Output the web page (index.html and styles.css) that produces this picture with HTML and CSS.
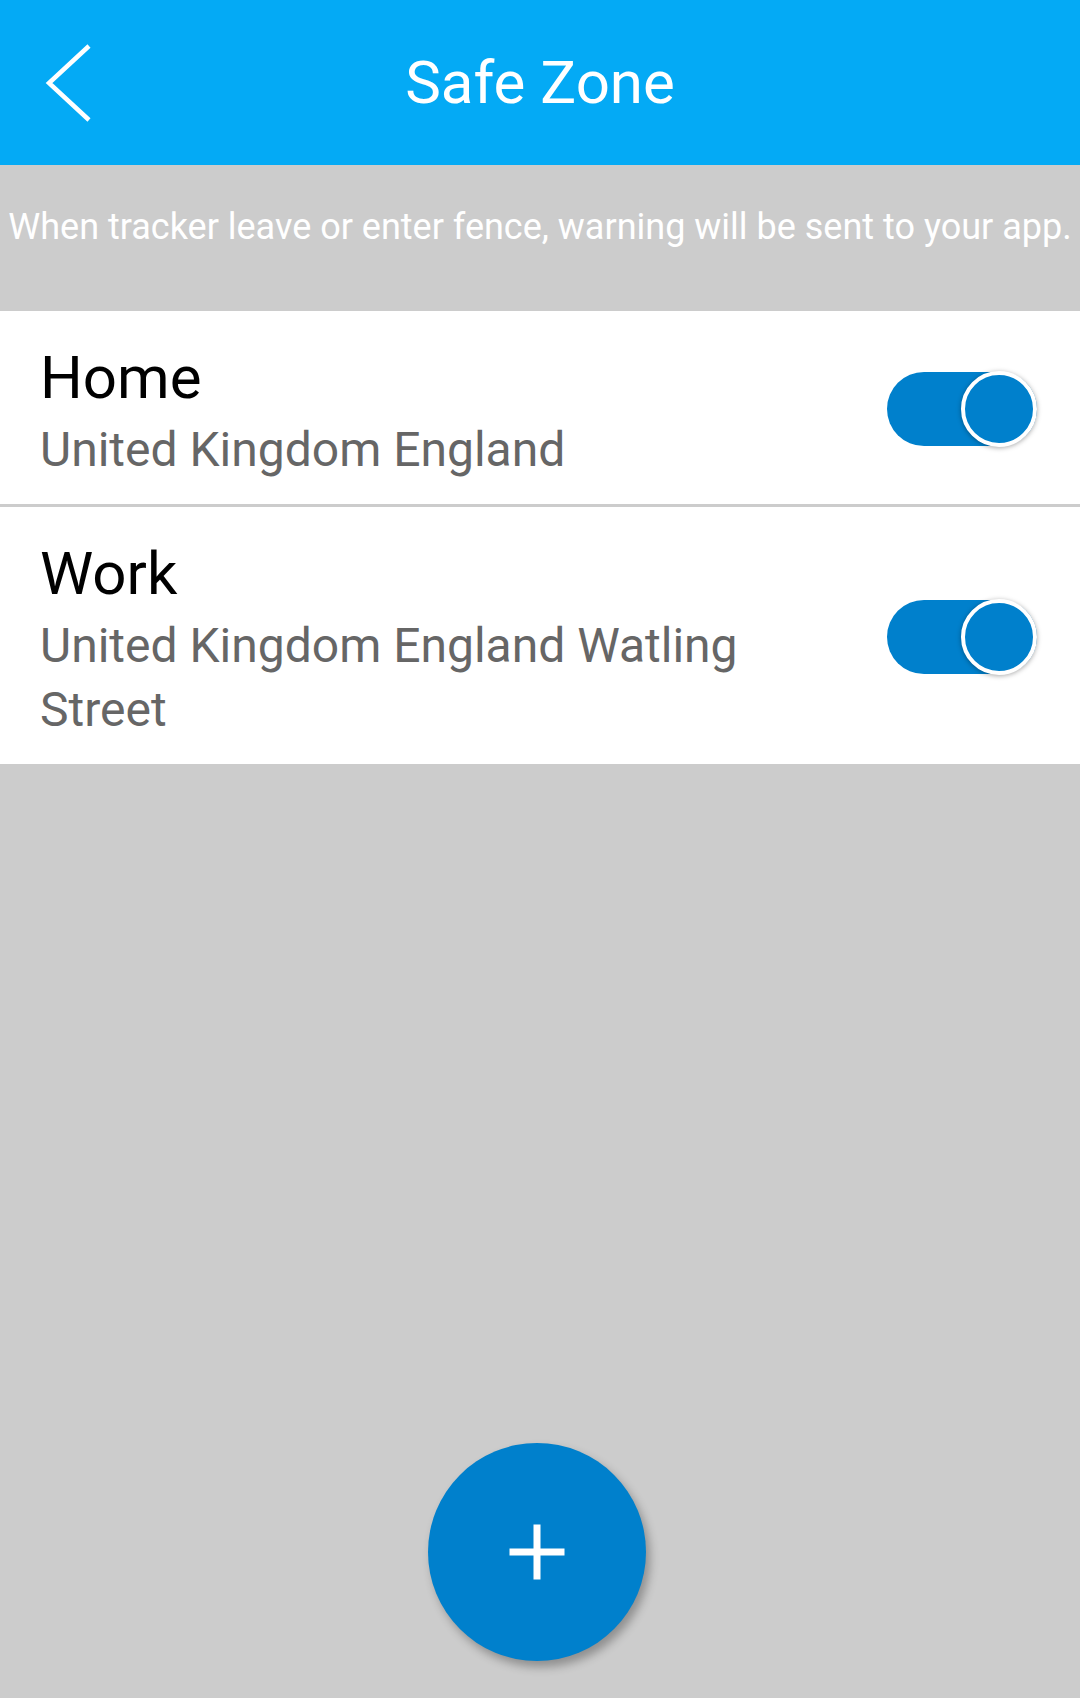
FILE: index.html
```html
<!DOCTYPE html>
<html lang="en">
<head>
<meta charset="utf-8">
<title>Safe Zone</title>
<link rel="stylesheet" href="styles.css">
</head>
<body>
<div class="screen">
  <header class="toolbar">
    <div class="toolbar-left">
      <svg class="back-icon" width="50" height="80" viewBox="0 0 50 80" aria-hidden="true">
        <polyline points="45,3 5,40 45,77" fill="none" stroke="#ffffff" stroke-width="4.5" stroke-linecap="butt" stroke-linejoin="miter"/>
      </svg>
    </div>
    <h1 class="toolbar-title">Safe Zone</h1>
    <div class="toolbar-right"></div>
  </header>

  <p class="notice">When tracker leave or enter fence, warning will be sent to your app.</p>

  <ul class="zone-list">
    <li class="zone">
      <div class="zone-text">
        <div class="zone-name">Home</div>
        <div class="zone-address">United Kingdom England</div>
      </div>
      <div class="switch on"><span class="knob"></span></div>
    </li>
    <li class="zone">
      <div class="zone-text">
        <div class="zone-name">Work</div>
        <div class="zone-address">United Kingdom England Watling Street</div>
      </div>
      <div class="switch on"><span class="knob"></span></div>
    </li>
  </ul>

  <div class="spacer"></div>

  <div class="fab-wrap">
    <button class="fab" aria-label="Add safe zone">
      <span class="plus-h"></span>
      <span class="plus-v"></span>
    </button>
  </div>
</div>
</body>
</html>
```

FILE: styles.css
```css
* {
  box-sizing: border-box;
}

html, body {
  margin: 0;
  padding: 0;
}

body {
  font-family: Roboto, "Noto Sans", "Liberation Sans", sans-serif;
  background: #cccccc;
}

.screen {
  width: 1080px;
  height: 1698px;
  display: flex;
  flex-direction: column;
  background: #cccccc;
}

.toolbar {
  height: 165px;
  background: #04aaf5;
  display: grid;
  grid-template-columns: 1fr auto 1fr;
  align-items: center;
  flex-shrink: 0;
}

.toolbar-left {
  display: flex;
  align-items: center;
  padding-left: 44px;
}

.back-icon {
  display: block;
}

.toolbar-title {
  margin: 0;
  font-weight: 400;
  font-size: 60px;
  line-height: 70px;
  color: #ffffff;
}

.notice {
  margin: 0;
  height: 146px;
  padding-top: 41px;
  font-size: 36px;
  line-height: 42px;
  color: #ffffff;
  text-align: center;
  white-space: nowrap;
  flex-shrink: 0;
}

.zone-list {
  list-style: none;
  margin: 0;
  padding: 0;
  background: #ffffff;
  flex-shrink: 0;
}

.zone {
  display: flex;
  align-items: center;
  padding: 32px 43px 22px 40px;
}

.zone + .zone {
  border-top: 3px solid #cccccc;
}

.zone-text {
  flex: 1;
  min-width: 0;
  padding-right: 130px;
}

.zone-name {
  font-size: 60px;
  line-height: 70px;
  color: #000000;
  margin-bottom: 5px;
}

.zone-address {
  font-size: 48px;
  line-height: 64px;
  color: #666666;
}

.switch {
  position: relative;
  width: 150px;
  height: 74px;
  border-radius: 37px;
  background: #0080cc;
  flex-shrink: 0;
  margin-top: -8px;
}

.knob {
  position: absolute;
  right: 0;
  top: -1px;
  width: 76px;
  height: 76px;
  border-radius: 50%;
  background: #0080cc;
  border: 4px solid #ffffff;
  box-shadow: 0 1px 5px rgba(0, 0, 0, 0.35);
}

.spacer {
  flex: 1;
}

.fab-wrap {
  display: flex;
  justify-content: center;
  padding-bottom: 37px;
  flex-shrink: 0;
}

.fab {
  position: relative;
  width: 218px;
  height: 218px;
  border-radius: 50%;
  border: none;
  padding: 0;
  background: #0080cc;
  box-shadow: 4px 6px 10px rgba(0, 0, 0, 0.3);
  margin-left: -7px;
}

.plus-h,
.plus-v {
  position: absolute;
  background: #ffffff;
  left: 50%;
  top: 50%;
}

.plus-h {
  width: 55px;
  height: 7px;
  transform: translate(-50%, -50%);
}

.plus-v {
  width: 7px;
  height: 55px;
  transform: translate(-50%, -50%);
}
```
